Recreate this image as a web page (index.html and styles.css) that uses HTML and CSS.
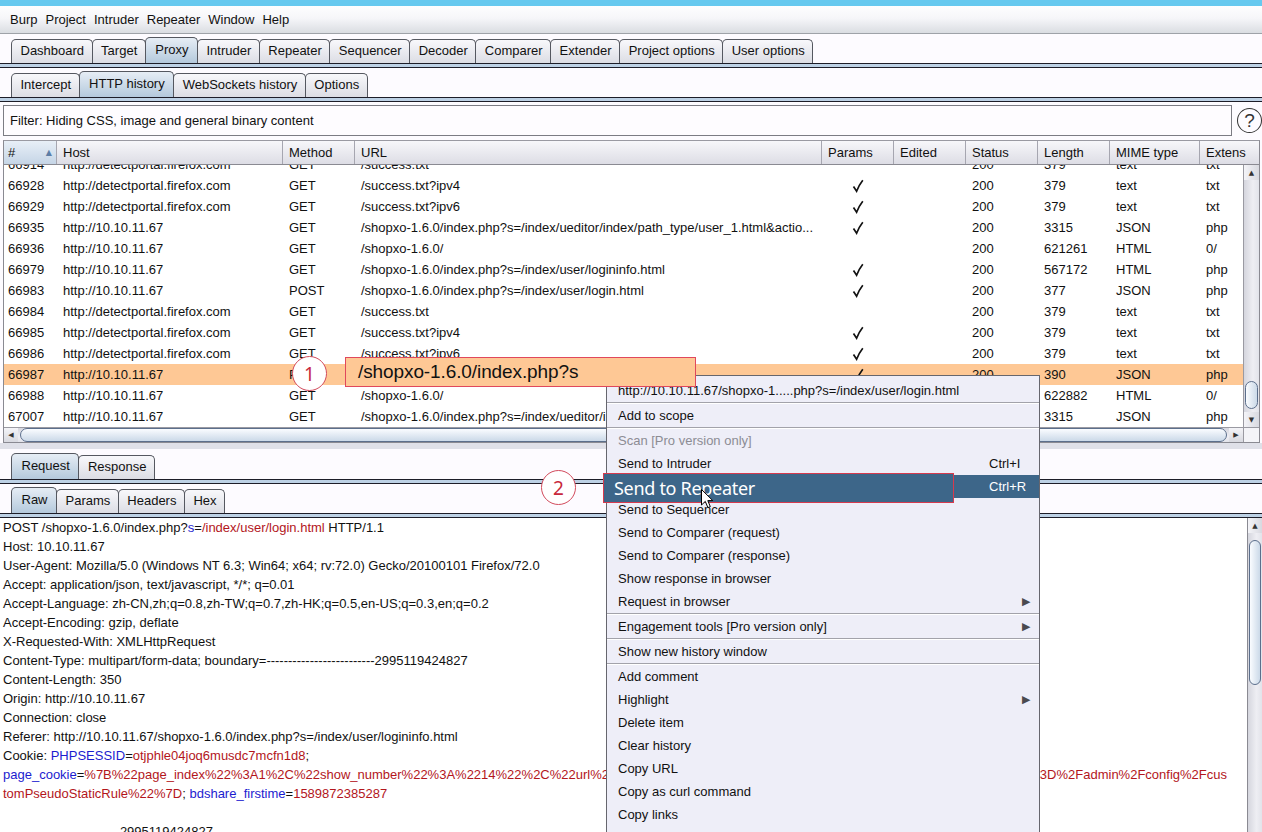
FILE: index.html
```html
<!DOCTYPE html>
<html>
<head>
<meta charset="utf-8">
<link rel="stylesheet" href="styles.css">
</head>
<body>
<div class="titlebar"></div>
<div class="menubar"><span>Burp</span><span>Project</span><span>Intruder</span><span>Repeater</span><span>Window</span><span>Help</span></div>

<div class="tabstrip">
  <div class="tab">Dashboard</div><div class="tab">Target</div><div class="tab sel">Proxy</div><div class="tab">Intruder</div><div class="tab">Repeater</div><div class="tab">Sequencer</div><div class="tab">Decoder</div><div class="tab">Comparer</div><div class="tab">Extender</div><div class="tab">Project options</div><div class="tab">User options</div>
</div>
<div class="tabline"></div>
<div class="tabstrip">
  <div class="tab">Intercept</div><div class="tab sel">HTTP history</div><div class="tab">WebSockets history</div><div class="tab">Options</div>
</div>
<div class="tabline"></div>

<div class="filter-row">
  <div class="filter">Filter: Hiding CSS, image and general binary content</div>
  <div class="help"><span>?</span></div>
</div>

<div class="table">
  <div class="thead">
    <div class="th sorted"><span>#</span><span class="sort">▲</span></div>
    <div class="th">Host</div>
    <div class="th">Method</div>
    <div class="th">URL</div>
    <div class="th">Params</div>
    <div class="th">Edited</div>
    <div class="th">Status</div>
    <div class="th">Length</div>
    <div class="th">MIME type</div>
    <div class="th last">Extens</div>
  </div>
  <div class="tbody">
    <div class="rows">
      <div class="tr partial"><div>66914</div><div>http://detectportal.firefox.com</div><div>GET</div><div>/success.txt</div><div class="ck"></div><div></div><div>200</div><div>379</div><div>text</div><div>txt</div></div>
      <div class="tr"><div>66928</div><div>http://detectportal.firefox.com</div><div>GET</div><div>/success.txt?ipv4</div><div class="ck"><svg width="12" height="14" viewBox="0 0 12 14"><path d="M1.5 7.5 L4.6 12.2 Q7 6 10.8 1.2" fill="none" stroke="#111" stroke-width="1.7"/></svg></div><div></div><div>200</div><div>379</div><div>text</div><div>txt</div></div>
      <div class="tr"><div>66929</div><div>http://detectportal.firefox.com</div><div>GET</div><div>/success.txt?ipv6</div><div class="ck"><svg width="12" height="14" viewBox="0 0 12 14"><path d="M1.5 7.5 L4.6 12.2 Q7 6 10.8 1.2" fill="none" stroke="#111" stroke-width="1.7"/></svg></div><div></div><div>200</div><div>379</div><div>text</div><div>txt</div></div>
      <div class="tr"><div>66935</div><div>http://10.10.11.67</div><div>GET</div><div>/shopxo-1.6.0/index.php?s=/index/ueditor/index/path_type/user_1.html&amp;actio...</div><div class="ck"><svg width="12" height="14" viewBox="0 0 12 14"><path d="M1.5 7.5 L4.6 12.2 Q7 6 10.8 1.2" fill="none" stroke="#111" stroke-width="1.7"/></svg></div><div></div><div>200</div><div>3315</div><div>JSON</div><div>php</div></div>
      <div class="tr"><div>66936</div><div>http://10.10.11.67</div><div>GET</div><div>/shopxo-1.6.0/</div><div class="ck"></div><div></div><div>200</div><div>621261</div><div>HTML</div><div>0/</div></div>
      <div class="tr"><div>66979</div><div>http://10.10.11.67</div><div>GET</div><div>/shopxo-1.6.0/index.php?s=/index/user/logininfo.html</div><div class="ck"><svg width="12" height="14" viewBox="0 0 12 14"><path d="M1.5 7.5 L4.6 12.2 Q7 6 10.8 1.2" fill="none" stroke="#111" stroke-width="1.7"/></svg></div><div></div><div>200</div><div>567172</div><div>HTML</div><div>php</div></div>
      <div class="tr"><div>66983</div><div>http://10.10.11.67</div><div>POST</div><div>/shopxo-1.6.0/index.php?s=/index/user/login.html</div><div class="ck"><svg width="12" height="14" viewBox="0 0 12 14"><path d="M1.5 7.5 L4.6 12.2 Q7 6 10.8 1.2" fill="none" stroke="#111" stroke-width="1.7"/></svg></div><div></div><div>200</div><div>377</div><div>JSON</div><div>php</div></div>
      <div class="tr"><div>66984</div><div>http://detectportal.firefox.com</div><div>GET</div><div>/success.txt</div><div class="ck"></div><div></div><div>200</div><div>379</div><div>text</div><div>txt</div></div>
      <div class="tr"><div>66985</div><div>http://detectportal.firefox.com</div><div>GET</div><div>/success.txt?ipv4</div><div class="ck"><svg width="12" height="14" viewBox="0 0 12 14"><path d="M1.5 7.5 L4.6 12.2 Q7 6 10.8 1.2" fill="none" stroke="#111" stroke-width="1.7"/></svg></div><div></div><div>200</div><div>379</div><div>text</div><div>txt</div></div>
      <div class="tr"><div>66986</div><div>http://detectportal.firefox.com</div><div>GET</div><div>/success.txt?ipv6</div><div class="ck"><svg width="12" height="14" viewBox="0 0 12 14"><path d="M1.5 7.5 L4.6 12.2 Q7 6 10.8 1.2" fill="none" stroke="#111" stroke-width="1.7"/></svg></div><div></div><div>200</div><div>379</div><div>text</div><div>txt</div></div>
      <div class="tr hl"><div>66987</div><div>http://10.10.11.67</div><div>POST</div><div>/shopxo-1.6.0/index.php?s=/index/user/login.html</div><div class="ck"><svg width="12" height="14" viewBox="0 0 12 14"><path d="M1.5 7.5 L4.6 12.2 Q7 6 10.8 1.2" fill="none" stroke="#111" stroke-width="1.7"/></svg></div><div></div><div>200</div><div>390</div><div>JSON</div><div>php</div></div>
      <div class="tr"><div>66988</div><div>http://10.10.11.67</div><div>GET</div><div>/shopxo-1.6.0/</div><div class="ck"></div><div></div><div>200</div><div>622882</div><div>HTML</div><div>0/</div></div>
      <div class="tr"><div>67007</div><div>http://10.10.11.67</div><div>GET</div><div>/shopxo-1.6.0/index.php?s=/index/ueditor/index/path_type/user_1.html&amp;actio...</div><div class="ck"><svg width="12" height="14" viewBox="0 0 12 14"><path d="M1.5 7.5 L4.6 12.2 Q7 6 10.8 1.2" fill="none" stroke="#111" stroke-width="1.7"/></svg></div><div></div><div>200</div><div>3315</div><div>JSON</div><div>php</div></div>
    </div>
    <div class="vscroll">
      <div class="arrow">▲</div>
      <div class="track"><div class="thumb t1"></div></div>
      <div class="arrow">▼</div>
    </div>
  </div>
  <div class="hscroll-row">
    <div class="hscroll">
      <div class="arrow">◀</div>
      <div class="htrack"><div class="hthumb"></div></div>
      <div class="arrow">▶</div>
    </div>
    <div class="corner"></div>
  </div>
</div>

<div class="divider"></div>
<div class="tabstrip tall">
  <div class="tab sel">Request</div><div class="tab">Response</div>
</div>
<div class="tabline"></div>
<div class="tabstrip">
  <div class="tab sel">Raw</div><div class="tab">Params</div><div class="tab">Headers</div><div class="tab">Hex</div>
</div>
<div class="tabline"></div>

<div class="editor">
  <div class="text">
    <div class="ln">POST /shopxo-1.6.0/index.php?<span class="k">s</span>=<span class="v">/index/user/login.html</span> HTTP/1.1</div>
    <div class="ln">Host: 10.10.11.67</div>
    <div class="ln">User-Agent: Mozilla/5.0 (Windows NT 6.3; Win64; x64; rv:72.0) Gecko/20100101 Firefox/72.0</div>
    <div class="ln">Accept: application/json, text/javascript, */*; q=0.01</div>
    <div class="ln">Accept-Language: zh-CN,zh;q=0.8,zh-TW;q=0.7,zh-HK;q=0.5,en-US;q=0.3,en;q=0.2</div>
    <div class="ln">Accept-Encoding: gzip, deflate</div>
    <div class="ln">X-Requested-With: XMLHttpRequest</div>
    <div class="ln">Content-Type: multipart/form-data; boundary=-------------------------2995119424827</div>
    <div class="ln">Content-Length: 350</div>
    <div class="ln">Origin: http://10.10.11.67</div>
    <div class="ln">Connection: close</div>
    <div class="ln">Referer: http://10.10.11.67/shopxo-1.6.0/index.php?s=/index/user/logininfo.html</div>
    <div class="ln">Cookie: <span class="k">PHPSESSID</span>=<span class="v">otjphle04joq6musdc7mcfn1d8</span>;</div>
    <div class="ln split"><span><span class="k">page_cookie</span>=<span class="v">%7B%22page_index%22%3A1%2C%22show_number%22%3A%2214%22%2C%22url%22%3A%22%2Fshopxo</span></span><span class="v tail">3D%2Fadmin%2Fconfig%2Fcus</span></div>
    <div class="ln"><span class="v">tomPseudoStaticRule%22%7D</span>; <span class="k">bdshare_firstime</span>=<span class="v">1589872385287</span></div>
    <div class="ln">&nbsp;</div>
    <div class="ln">---------------------------2995119424827</div>
  </div>
  <div class="vscroll ed">
    <div class="arrow">▲</div>
    <div class="track"><div class="thumb t2"></div></div>
    <div class="arrow">▼</div>
  </div>
</div>

<div class="ctxmenu">
  <div class="mi">http://10.10.11.67/shopxo-1.....php?s=/index/user/login.html</div>
  <div class="sep"></div>
  <div class="mi">Add to scope</div>
  <div class="sep"></div>
  <div class="mi dis">Scan [Pro version only]</div>
  <div class="mi"><span class="lbl">Send to Intruder</span><span class="sc">Ctrl+I</span></div>
  <div class="mi act"><span class="lbl">Send to Repeater</span><span class="sc">Ctrl+R</span></div>
  <div class="mi">Send to Sequencer</div>
  <div class="mi">Send to Comparer (request)</div>
  <div class="mi">Send to Comparer (response)</div>
  <div class="mi">Show response in browser</div>
  <div class="mi"><span class="lbl">Request in browser</span><span class="arr">▶</span></div>
  <div class="sep"></div>
  <div class="mi"><span class="lbl">Engagement tools [Pro version only]</span><span class="arr">▶</span></div>
  <div class="sep"></div>
  <div class="mi">Show new history window</div>
  <div class="sep"></div>
  <div class="mi">Add comment</div>
  <div class="mi"><span class="lbl">Highlight</span><span class="arr">▶</span></div>
  <div class="mi">Delete item</div>
  <div class="mi">Clear history</div>
  <div class="mi">Copy URL</div>
  <div class="mi">Copy as curl command</div>
  <div class="mi">Copy links</div>
</div>

<div class="badge b1">1</div>
<div class="callout">/shopxo-1.6.0/index.php?s</div>
<div class="badge b2">2</div>
<div class="repbox">Send to Repeater</div>
<svg class="cursor" width="13" height="20" viewBox="0 0 13 20"><path d="M0.5 0.5 L0.5 16 L4.3 12.4 L6.9 18.6 L9.3 17.6 L6.8 11.6 L11.8 11.6 Z" fill="#fff" stroke="#000" stroke-width="1"/></svg>
</body>
</html>
```

FILE: styles.css
```css
html, body {
  margin: 0;
  height: 832px;
  overflow: hidden;
}
body {
  position: relative;
  background: #fdfbff;
  font: 13px "Liberation Sans", Arial, sans-serif;
  color: #111;
}
.titlebar {
  height: 6px;
  background: #66c9ef;
}
.menubar {
  height: 27px;
  display: flex;
  align-items: center;
  padding-left: 6px;
  background: linear-gradient(#fefeff 0%, #f6f6f9 45%, #dadde2 100%);
  border-bottom: 1px solid #9ea2a8;
}
.menubar span {
  padding: 0 4px 0 4px;
}
.tabstrip {
  height: 29px;
  display: flex;
  align-items: flex-end;
  padding-left: 11px;
}
.tabstrip.tall {
  height: 30px;
}
.tab {
  height: 24px;
  box-sizing: border-box;
  padding: 0 7.5px 2px 8.5px;
  border: 1px solid #555860;
  border-bottom: none;
  border-radius: 5px 5px 0 0;
  background: linear-gradient(#f8f8fb, #dcdde4);
  display: flex;
  align-items: center;
  margin-right: -1px;
  white-space: nowrap;
}
.tab.sel {
  height: 26px;
  padding: 0 8.5px 2px 9.5px;
  background: linear-gradient(#e6edf5, #b4c9dc);
}
.tabline {
  height: 3px;
  border-top: 1px solid #1d1d28;
  border-bottom: 1px solid #1d1d28;
  background: #bdd1e5;
}
.filter-row {
  display: flex;
  align-items: center;
  margin-top: 3px;
  padding-left: 3px;
}
.filter {
  width: 1230px;
  height: 31px;
  box-sizing: border-box;
  border: 1px solid #7c7c84;
  background: #fefcff;
  display: flex;
  align-items: center;
  padding-left: 6px;
}
.help {
  width: 23px;
  height: 23px;
  margin-left: 5px;
  border: 1.5px solid #333;
  border-radius: 50%;
  display: flex;
  align-items: center;
  justify-content: center;
  font-size: 19px;
  color: #333;
}
.help span {
  margin-top: 1px;
}
.table {
  margin: 4px 0 0 3px;
  width: 1257px;
  box-sizing: border-box;
  border: 1px solid #8a8a92;
  border-top-color: #9a9aa2;
  background: #fff;
}
.thead {
  display: grid;
  grid-template-columns: 53px 226px 72px 467px 72px 72px 72px 72px 90px 1fr;
  height: 23px;
  border-bottom: 1px solid #8a8a92;
  background: linear-gradient(#f7f7fa, #dddde5);
}
.th {
  display: flex;
  align-items: center;
  padding-left: 6px;
  border-right: 1px solid #a6a6b0;
  white-space: nowrap;
  overflow: hidden;
}
.th.last {
  border-right: none;
}
.th.sorted {
  padding-left: 4px;
  justify-content: space-between;
  padding-right: 4px;
  background: linear-gradient(#e8eff7, #c5d5e6);
}
.sort {
  font-size: 8px;
  color: #5d7ea6;
  font-family: "DejaVu Sans", sans-serif;
}
.tbody {
  display: flex;
  height: 262px;
}
.rows {
  flex: 1;
  overflow: hidden;
}
.tr {
  display: grid;
  grid-template-columns: 53px 226px 72px 467px 72px 72px 72px 72px 90px 1fr;
  height: 21px;
  align-items: center;
  white-space: nowrap;
}
.tr > div {
  padding-left: 6px;
  overflow: hidden;
}
.tr > div:first-child {
  padding-left: 4px;
}
.tr.partial {
  margin-top: -11px;
}
.tr.hl {
  background: #fec895;
}
.tr > .ck {
  padding-left: 0;
  display: flex;
  justify-content: center;
  align-items: center;
  height: 21px;
}
.vscroll {
  width: 15px;
  display: flex;
  flex-direction: column;
  border-left: 1px solid #9a9aa2;
  background: linear-gradient(to right, #d5d6de, #eeeef3 60%, #e2e3ea);
}
.arrow {
  height: 15px;
  flex: none;
  display: flex;
  align-items: center;
  justify-content: center;
  font-size: 7px;
  color: #333;
  font-family: "DejaVu Sans", sans-serif;
  background: linear-gradient(to right, #f4f4f8, #d8d9e0);
}
.track {
  flex: 1;
  display: flex;
  flex-direction: column;
  justify-content: flex-end;
}
.thumb {
  margin: 0 1px;
  border: 1px solid #5c6f8c;
  border-radius: 8px;
  background: linear-gradient(to right, #fafcff, #cbd9e8);
}
.thumb.t1 {
  height: 26px;
  margin-bottom: 3px;
}
.hscroll-row {
  display: flex;
  height: 14px;
  border-top: 1px solid #9a9aa2;
}
.hscroll {
  flex: 1;
  display: flex;
  background: linear-gradient(#d5d6de, #eeeef3 60%, #e2e3ea);
}
.hscroll .arrow {
  width: 14px;
  height: auto;
  background: linear-gradient(#f4f4f8, #d8d9e0);
}
.htrack {
  flex: 1;
  display: flex;
  padding: 0 2px;
}
.hthumb {
  flex: 1;
  border: 1px solid #5c6f8c;
  border-radius: 8px;
  background: linear-gradient(#fafcff, #cbd9e8);
}
.corner {
  width: 15px;
  border-left: 1px solid #9a9aa2;
  background: #f4f4f8;
}
.divider {
  height: 6px;
  background: #dfe0e8;
}
.editor {
  display: flex;
  height: 330px;
  background: #fff;
}
.text {
  flex: 1;
  padding-left: 3px;
  overflow: hidden;
  white-space: nowrap;
}
.ln {
  height: 19px;
  line-height: 19px;
}
.ln.split {
  display: flex;
}
.ln .tail {
  margin-left: auto;
  margin-right: 20px;
}
.k {
  color: #1c1ccf;
}
.v {
  color: #b3161c;
}
.vscroll.ed {
  width: 14px;
  flex: none;
  border-left: 1px solid #8a8a92;
}
.thumb.t2 {
  height: 143px;
  margin-bottom: 148px;
}
.ctxmenu {
  position: absolute;
  left: 606px;
  top: 375px;
  width: 434px;
  height: 480px;
  box-sizing: border-box;
  border: 1px solid #66666e;
  background: #eeeef8;
  padding-top: 3px;
}
.mi {
  height: 23px;
  display: flex;
  align-items: center;
  padding-left: 11px;
  white-space: nowrap;
}
.mi .lbl {
  flex: 1;
}
.mi .sc {
  width: 50px;
}
.mi .arr {
  width: 17px;
  font-size: 11px;
  color: #4a4a50;
  font-family: "DejaVu Sans", sans-serif;
}
.mi.dis {
  color: #8c8c94;
}
.mi.act {
  background: #3d6689;
  color: #fff;
}
.sep {
  height: 1px;
  border-top: 1px solid #a2a2aa;
  background: #fff;
}
.badge {
  position: absolute;
  width: 33px;
  height: 33px;
  border: 1.5px solid #d24b5c;
  border-radius: 50%;
  background: #fff;
  display: flex;
  align-items: center;
  justify-content: center;
  font: 19px "Noto Sans", "Liberation Sans", sans-serif;
  color: #c8283c;
}
.b1 {
  left: 292px;
  top: 356px;
}
.b2 {
  left: 541px;
  top: 470px;
}
.callout {
  position: absolute;
  left: 345px;
  top: 357px;
  width: 351px;
  height: 30px;
  box-sizing: border-box;
  border: 1px solid #e0485c;
  background: #fec895;
  padding-left: 12px;
  display: flex;
  align-items: center;
  font-size: 19px;
  color: #111;
  letter-spacing: -0.1px;
}
.repbox {
  position: absolute;
  left: 603px;
  top: 473px;
  width: 351px;
  height: 30px;
  box-sizing: border-box;
  border: 1px solid #d63a4e;
  background: #3d6689;
  color: #fff;
  padding-left: 10px;
  display: flex;
  align-items: center;
  font: 18px "Noto Sans", "Open Sans", sans-serif;
  letter-spacing: -0.3px;
}
.cursor {
  position: absolute;
  left: 701px;
  top: 489px;
}
```
